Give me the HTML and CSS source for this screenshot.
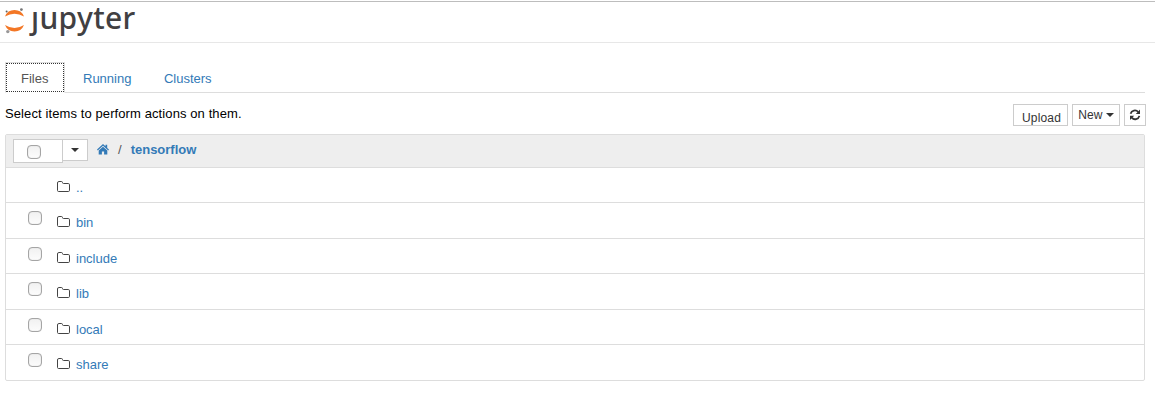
FILE: index.html
```html
<!DOCTYPE html>
<html lang="en">
<head>
<meta charset="utf-8">
<title>tensorflow/</title>
<link rel="stylesheet" href="styles.css">
</head>
<body>
<svg class="symbols" aria-hidden="true">
  <symbol id="folder" viewBox="0 0 14 12"><path d="M.5 9.5V2Q.5.5 1.9.5H4.3Q5.5.5 5.5 1.5Q5.5 2.5 6.5 2.5H11.3Q12.5 2.5 12.5 3.8V9.3Q12.5 10.5 11.4 10.5H1.7Q.5 10.5.5 9.5Z" fill="none" stroke="currentColor" stroke-width="1"/></symbol>
</svg>
<header class="header">
  <svg class="logo-mark" viewBox="0 0 20 30" width="20" height="30">
    <path d="M0 9.6A10.2 10.2 0 0 1 19 9.6Q9.5 3.7 0 9.6Z" fill="#f37726"/>
    <path d="M0 18A10.2 10.2 0 0 0 19 18Q9.5 24 0 18Z" fill="#f37726"/>
    <circle cx="1.6" cy="4.5" r="1" fill="#616262"/>
    <circle cx="16.4" cy="2.6" r="1.4" fill="#767677"/>
    <circle cx="2.8" cy="24.6" r="1.7" fill="#989798"/>
  </svg>
  <span class="logo-text">ȷupyter</span>
</header>
<main class="content">
  <nav class="tabs">
    <a class="tab active">Files</a>
    <a class="tab">Running</a>
    <a class="tab">Clusters</a>
  </nav>
  <div class="toolbar">
    <span class="hint">Select items to perform actions on them.</span>
    <div class="buttons">
      <button class="btn upload">Upload</button>
      <button class="btn new">New <i class="caret"></i></button>
      <button class="btn refresh"><svg width="12" height="12" viewBox="0 0 12 12"><path d="M1.6 4.7A4.4 4.4 0 0 1 9.2 3M10.4 6.9A4.4 4.4 0 0 1 2.8 8.7" fill="none" stroke="#333" stroke-width="1.8"/><path d="M11 .6V5H6.8ZM1 11V6.8H5.2Z" fill="#333"/></svg></button>
    </div>
  </div>
  <section class="list">
    <div class="list-header">
      <div class="select"><span class="select-all"><i class="check"></i></span><span class="select-menu"><i class="caret"></i></span></div>
      <svg class="home" width="12" height="11" viewBox="0 0 12 11"><path d="M6 0 8.5 2.3V.8H10.2V3.9L12 5.5 11.2 6.4 6 1.8.8 6.4 0 5.5Z"/><path d="M6 2.8 10.3 6.6V10.5H7.1V7.4H4.9V10.5H1.7V6.6Z"/></svg>
      <span class="slash">/</span>
      <a class="crumb">tensorflow</a>
    </div>
    <div class="row"><span class="box"></span><svg class="folder"><use href="#folder"/></svg><a>..</a></div>
    <div class="row"><span class="box"><i class="check"></i></span><svg class="folder"><use href="#folder"/></svg><a>bin</a></div>
    <div class="row"><span class="box"><i class="check"></i></span><svg class="folder"><use href="#folder"/></svg><a>include</a></div>
    <div class="row"><span class="box"><i class="check"></i></span><svg class="folder"><use href="#folder"/></svg><a>lib</a></div>
    <div class="row"><span class="box"><i class="check"></i></span><svg class="folder"><use href="#folder"/></svg><a>local</a></div>
    <div class="row"><span class="box"><i class="check"></i></span><svg class="folder"><use href="#folder"/></svg><a>share</a></div>
  </section>
</main>
</body>
</html>
```
FILE: styles.css
```css
* { box-sizing: border-box; }
body {
  margin: 0;
  padding-top: 1px;
  background: #fff;
  color: #000;
  font: 13px/20px "Liberation Sans", Arial, sans-serif;
}
a { color: #337ab7; }
.symbols { display: none; }
.header {
  display: flex;
  height: 42px;
  padding: 5px 0 0 5px;
  border-top: 1px solid #bdbdbd;
  border-bottom: 1px solid #e7e7e7;
}
.logo-mark { flex: none; }
.logo-text {
  margin: -6px 0 0 6px;
  color: #414042;
  font: 500 30px/34px "Noto Sans", "Open Sans", sans-serif;
  letter-spacing: .35px;
}
.content { padding: 19px 10px 0 5px; }
.tabs {
  display: flex;
  height: 31px;
  border-bottom: 1px solid #ddd;
}
.tab { height: 30px; padding: 7px 16px 0; }
.tab.active {
  width: 60px;
  margin-right: 2px;
  height: 31px;
  background: #fff;
  color: #555;
  border: 1px solid #ddd;
  border-bottom-color: #fff;
  outline: 1px dotted #333;
  outline-offset: -2px;
  padding: 6px 15px 0;
}
.toolbar {
  display: flex;
  justify-content: space-between;
  height: 41px;
  padding-top: 11px;
}
.tabs .tab:last-child { padding-left: 16.5px; }
.hint { letter-spacing: .1px; }
.buttons { display: flex; gap: 4px; margin-right: -1px; }
.btn {
  height: 22px;
  padding: 0;
  border: 1px solid #ccc;
  background: #fff;
  color: #333;
  font: 12px/18px "Liberation Sans", Arial, sans-serif;
}
.upload { width: 55px; padding: 4px 0 0 2px; letter-spacing: .15px; }
.new { width: 48px; }
.refresh { width: 22px; display: flex; align-items: center; justify-content: center; }
.caret {
  display: inline-block;
  border: 4px solid transparent;
  border-top-color: #333;
  border-bottom: 0;
  vertical-align: middle;
}
.new .caret { position: relative; top: -1px; }
.list { border: 1px solid #ddd; border-radius: 2px; }
.list-header {
  display: flex;
  height: 31.7px;
  padding: 4px 0 0 7px;
  background: #eee;
}
.select { display: flex; align-items: flex-start; }
.select-all {
  width: 50px;
  height: 24px;
  padding: 5px 0 0 13px;
  border: 1px solid #ccc;
  background: #fff;
}
.select-menu {
  display: flex;
  align-items: center;
  justify-content: center;
  width: 26px;
  height: 22px;
  margin-left: -1px;
  border: 1px solid #ccc;
  background: #fff;
}
.home { margin: 5px 0 0 9px; fill: #337ab7; }
.slash { margin: 1px 0 0 9px; color: #555; }
.crumb { margin: 1px 0 0 9px; font-weight: bold; }
.row {
  display: flex;
  height: 35.5px;
  border-top: 1px solid #ddd;
}
.box { width: 51px; padding: 8px 0 0 22px; }
.check {
  display: block;
  width: 14px;
  height: 14px;
  border: 1px solid #a5a5a5;
  border-radius: 4px;
  background: linear-gradient(#f1f1f1, #fcfcfc);
  box-shadow: inset 0 0 1px #bbb;
}
.folder { width: 14px; height: 12px; margin-top: 13px; color: #444; }
.row a { margin: 10.1px 0 0 5px; }
```
